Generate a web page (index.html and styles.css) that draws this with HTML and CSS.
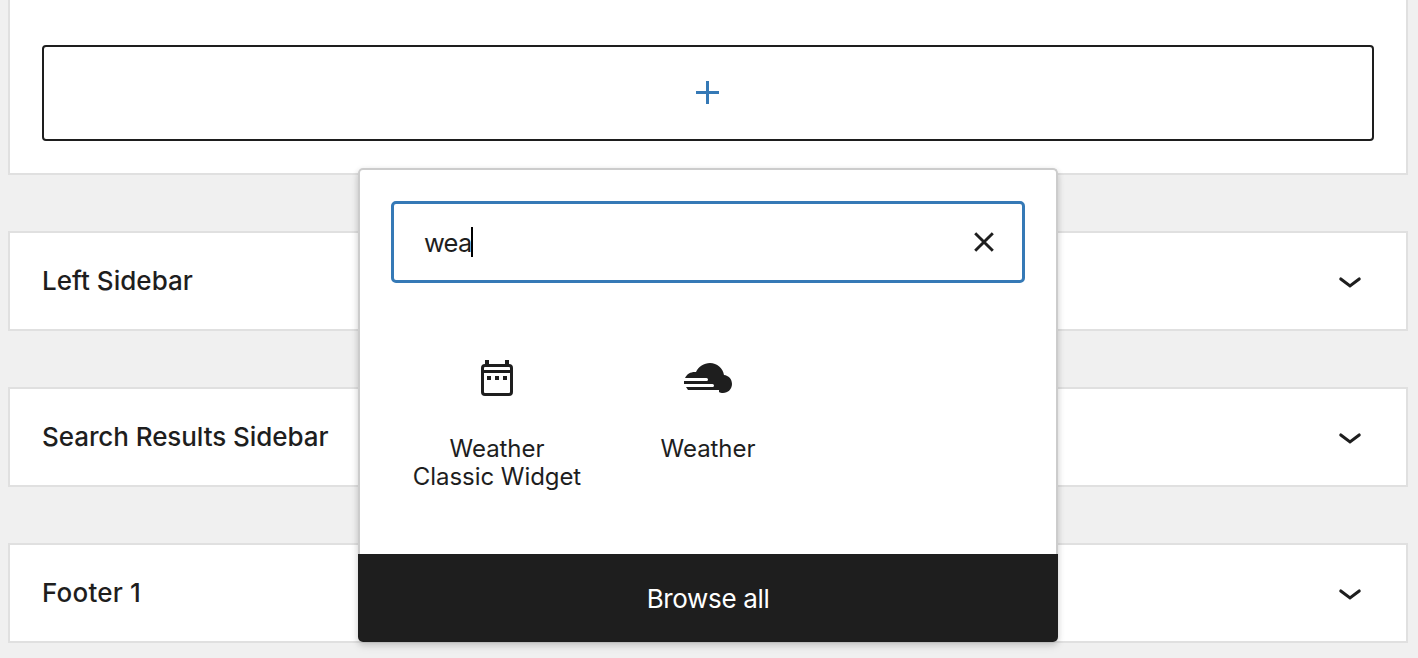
FILE: index.html
```html
<!DOCTYPE html>
<html lang="en">
<head>
<meta charset="utf-8">
<title>Widgets</title>
<link rel="stylesheet" href="styles.css">
</head>
<body>
<main class="areas">
  <section class="area area-open">
    <button class="appender" aria-label="Add block">
      <svg width="24" height="24" viewBox="0 0 24 24"><path d="M0 12.5h23M11.500 1v23" stroke="#3579b6" stroke-width="3" fill="none"/></svg>
    </button>
  </section>
  <section class="area area-closed">
    <h2 class="title">Left Sidebar</h2>
    <svg class="chevron" width="24" height="14" viewBox="0 0 24 14"><path d="M2.800 3L12 9.900L21.200 3"/></svg>
  </section>
  <section class="area area-closed">
    <h2 class="title title-long">Search Results Sidebar</h2>
    <svg class="chevron" width="24" height="14" viewBox="0 0 24 14"><path d="M2.800 3L12 9.900L21.200 3"/></svg>
  </section>
  <section class="area area-closed">
    <h2 class="title title-short">Footer 1</h2>
    <svg class="chevron" width="24" height="14" viewBox="0 0 24 14"><path d="M2.800 3L12 9.900L21.200 3"/></svg>
  </section>
</main>
<div class="inserter">
  <div class="content">
    <div class="search">
      <span class="query">wea</span><span class="caret"></span>
      <svg class="clear" width="20" height="20" viewBox="0 0 20 20"><path d="M1.2 1.2L18.8 18.8M18.8 1.2L1.2 18.8" stroke="#1e1e1e" stroke-width="2.9" fill="none"/></svg>
    </div>
    <div class="results">
      <div class="block">
        <svg class="icon" width="48" height="48" viewBox="0 0 48 48">
          <path d="M12 2h4v5h-4zM32 2h4v5h-4zM14 18h4v4h-4zM22 18h4v4h-4zM30 18h4v4h-4z" fill="#1e1e1e"/>
          <rect x="9.5" y="7.5" width="29" height="29" rx="2.5" fill="none" stroke="#1e1e1e" stroke-width="3"/>
          <path d="M9 13.5h30" stroke="#1e1e1e" stroke-width="3"/>
        </svg>
        <span class="label">Weather<br>Classic Widget</span>
      </div>
      <div class="block">
        <svg class="icon" width="48" height="48" viewBox="0 0 48 48">
          <path d="M1 20C3 15.5 7.500 13.500 12 14C14.500 8.500 20 5 26 5C33 5 39 10 40 17C44.500 17.500 48 21 48 26C48 31 44 35 39 35C37.500 35 36 34.600 35 34V32H4L2 29H28.500A1.500 1.500 0 0 0 28.500 26H0V23H22.500A1.500 1.500 0 0 0 22.500 20H1Z" fill="#1e1e1e"/>
        </svg>
        <span class="label">Weather</span>
      </div>
    </div>
  </div>
  <button class="browse">Browse all</button>
</div>
</body>
</html>
```
FILE: styles.css
```css
* { box-sizing: border-box; }
body {
  margin: 0;
  height: 658px;
  overflow: hidden;
  background: #f0f0f0;
  color: #1e1e1e;
  font-family: Inter, "Liberation Sans", sans-serif;
}
.areas {
  display: flex;
  flex-direction: column;
  gap: 56px;
  padding: 0 10px 0 8px;
}
.area { background: #fff; border: 2px solid #e0e0e0; }
.area-open { height: 175px; border-top: 0; padding: 45px 32px 0; }
.appender {
  display: flex;
  align-items: center;
  justify-content: center;
  width: 100%;
  height: 96px;
  padding: 0 0 2px;
  background: #fff;
  border: 2px solid #1e1e1e;
  border-radius: 4px;
}
.area-closed {
  display: flex;
  align-items: center;
  justify-content: space-between;
  height: 100px;
  padding: 0 44px 0 32px;
}
.title { margin: 0; font-size: 26px; line-height: 32px; font-weight: 540; letter-spacing: .03px; white-space: nowrap; }
.title-long { letter-spacing: -.07px; }
.title-short { letter-spacing: .2px; }
.chevron { margin-top: 3px; fill: none; stroke: #1e1e1e; stroke-width: 3.1; }
.chevron path { stroke-linecap: round; }
.inserter {
  position: absolute;
  left: 358px;
  top: 168px;
  width: 700px;
  height: 474px;
  border-radius: 5px;
  box-shadow: 0 2px 6px rgba(0, 0, 0, .14), 0 5px 8px rgba(0, 0, 0, .08);
}
.content {
  height: 386px;
  padding: 31px 31px 0;
  background: #fff;
  border: 2px solid #ccc;
  border-bottom: 0;
  border-radius: 5px 5px 0 0;
}
.search {
  display: flex;
  align-items: center;
  height: 82px;
  padding: 0 28px 0 30px;
  border: 3px solid #3579b6;
  border-radius: 5px;
}
.query { width: 47px; padding-top: 2px; font-size: 25.5px; line-height: 32px; letter-spacing: -.8px; }
.caret { width: 2px; height: 30px; background: #000; }
.clear { margin-left: auto; }
.results { display: grid; grid-template-columns: repeat(3, 211px); padding-top: 75px; }
.block { display: flex; flex-direction: column; align-items: center; gap: 29px; }
.icon { display: block; }
.label { padding-left: 1px; font-size: 24px; line-height: 28px; letter-spacing: -.06px; text-align: center; white-space: nowrap; }
.browse {
  display: block;
  width: 100%;
  height: 88px;
  padding: 2px 0 0;
  border: 0;
  border-radius: 0 0 5px 5px;
  background: #1e1e1e;
  color: #fff;
  font: 430 26px/32px Inter, "Liberation Sans", sans-serif;
  letter-spacing: -.35px;
}
```
